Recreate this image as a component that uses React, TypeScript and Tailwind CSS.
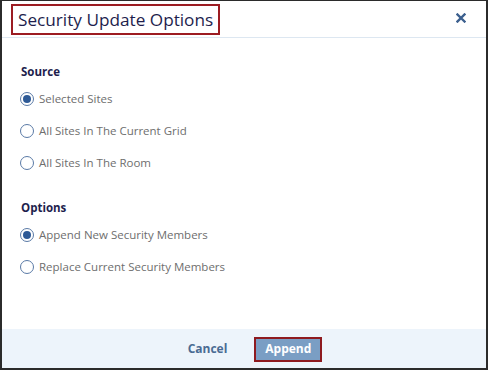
function Radio({ label, checked }: { label: string; checked?: boolean }) {
  return (
    <label className="flex items-center h-[32px] gap-[5px] cursor-pointer">
      <span className="w-[14px] h-[14px] rounded-full border border-[#5a7aa6] flex items-center justify-center bg-white">
        {checked && <span className="w-[8px] h-[8px] rounded-full bg-[#2e5a96]" />}
      </span>
      <span className="text-[11.5px] text-[#6e6e6e]">{label}</span>
    </label>
  );
}

export default function App() {
  return (
    <div className="w-[489px] h-[371px] bg-white" style={{ fontFamily: '"Open Sans", sans-serif' }}>
      <div className="w-[488px] h-[370px] border-2 border-t border-[#2b2b2b] flex flex-col">
        <div className="h-[37px] border-b border-[#dde7f1] flex items-center justify-between pl-[9px] pr-[20px]">
          <div className="h-[31px] border-2 border-[#9c1c22] flex items-center px-[5px] mt-[1px]">
            <span className="text-[17.2px] text-[#1e1e4d] leading-none">Security Update Options</span>
          </div>
          <svg width="10" height="10" viewBox="0 0 10 10" className="mt-[-2px]">
            <path d="M1.5 1.5 L8.5 8.5 M8.5 1.5 L1.5 8.5" stroke="#3b5f8e" strokeWidth="2.4" strokeLinecap="square" />
          </svg>
        </div>
        <div className="flex-1 pl-[18px] pt-[26px]">
          <div className="text-[11.5px] font-bold text-[#1e1e4d] leading-[16px] pl-[1px]">Source</div>
          <div className="mt-[3px]">
            <Radio label="Selected Sites" checked />
            <Radio label="All Sites In The Current Grid" />
            <Radio label="All Sites In The Room" />
          </div>
          <div className="text-[11.5px] font-bold text-[#1e1e4d] leading-[16px] mt-[21px] pl-[1px]">Options</div>
          <div className="mt-[3px]">
            <Radio label="Append New Security Members" checked />
            <Radio label="Replace Current Security Members" />
          </div>
        </div>
        <div className="h-[39px] bg-[#edf4fb] flex items-center justify-center gap-[27px] pl-[22px]">
          <button className="text-[12px] font-bold text-[#4a6b93]">Cancel</button>
          <button className="w-[68px] h-[25px] border-2 border-[#8e1a1f] bg-[#7a9ec4] text-white text-[12px] font-bold mt-[1px]">
            Append
          </button>
        </div>
      </div>
    </div>
  );
}
